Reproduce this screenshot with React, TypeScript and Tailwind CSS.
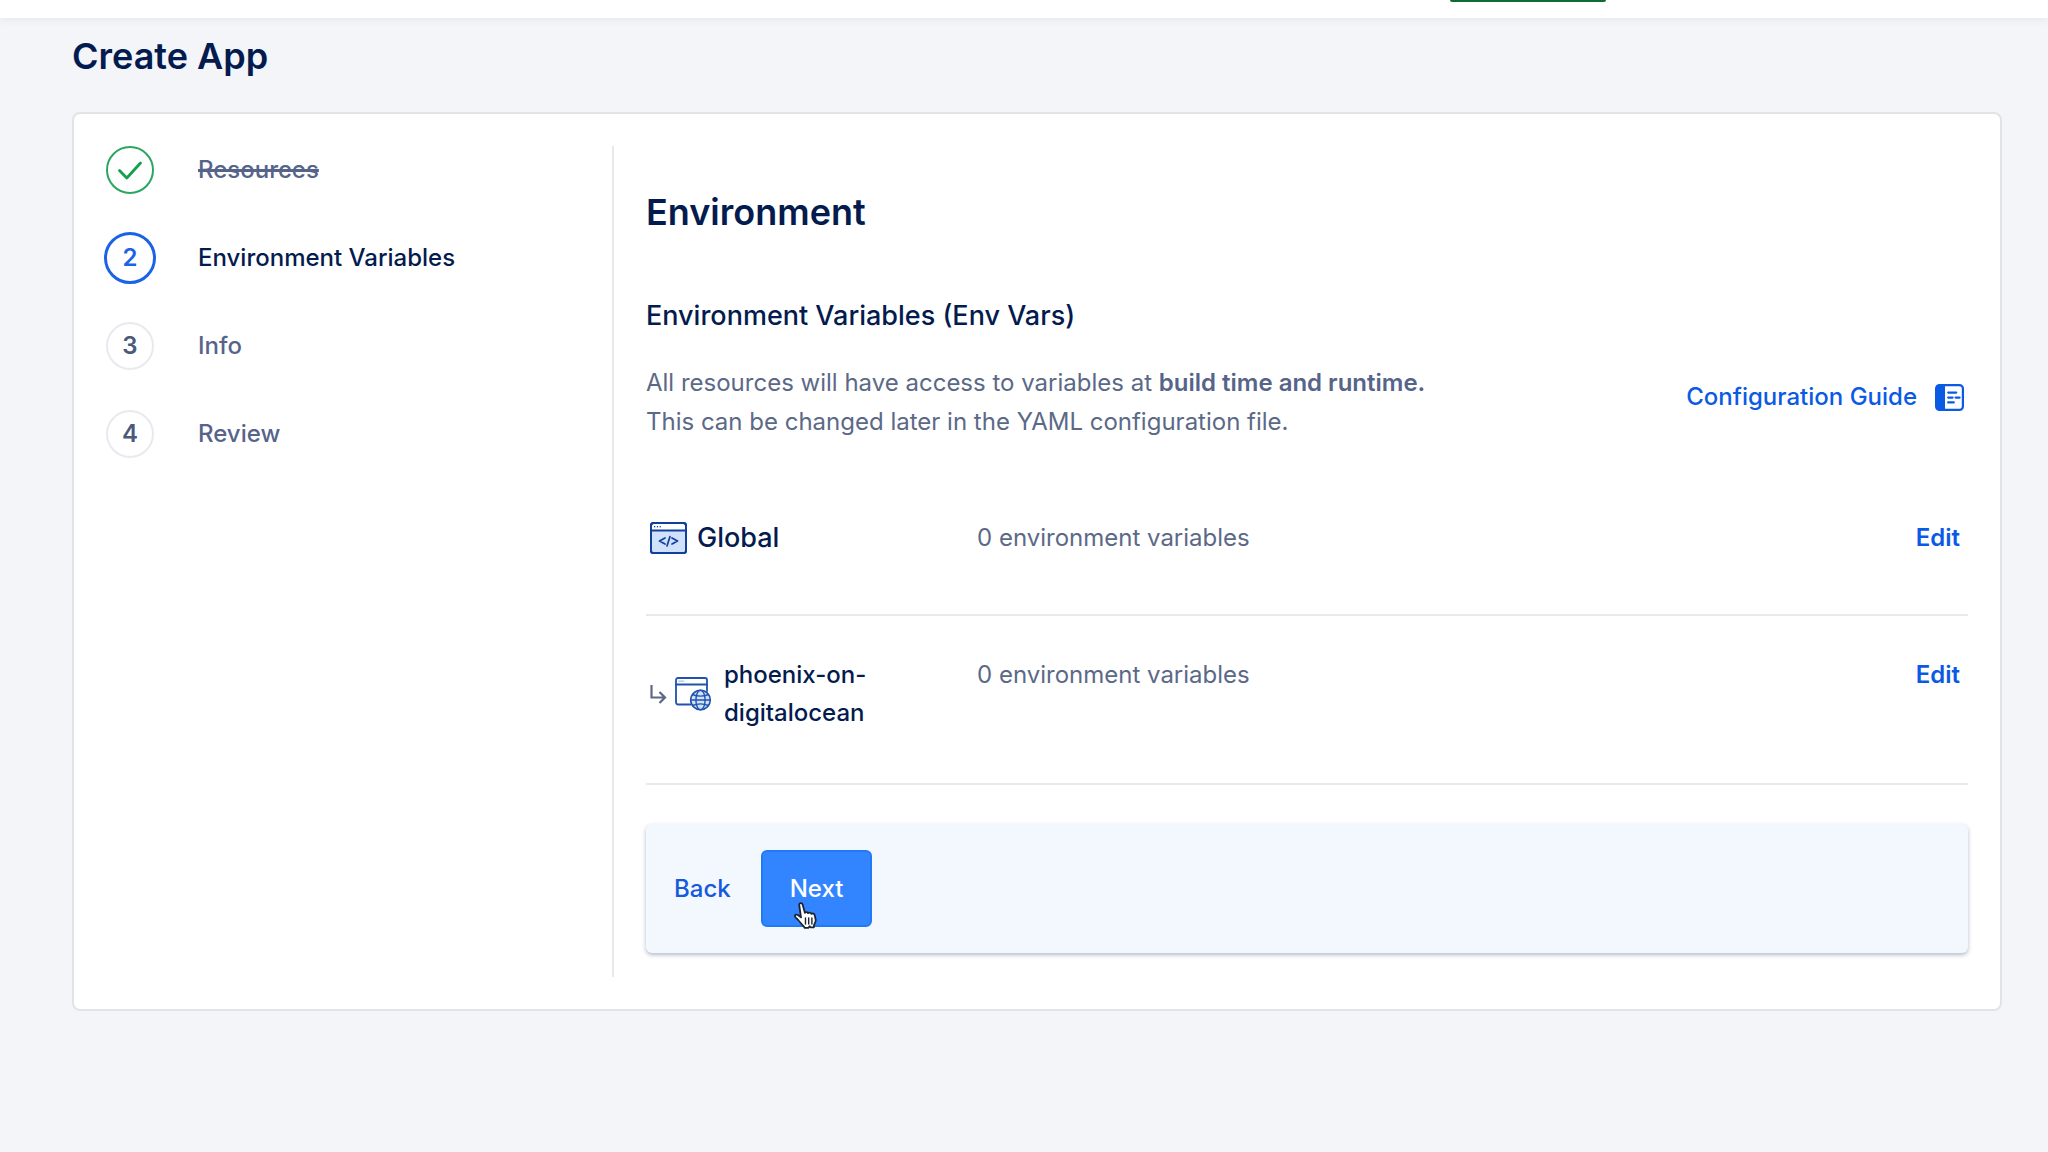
import { type ReactNode } from "react";

function CheckIcon() {
  return (
    <svg width="26" height="20" viewBox="0 0 26 20" fill="none" stroke="#15a04a" strokeWidth="2.8" strokeLinecap="round" strokeLinejoin="round" aria-hidden="true">
      <path d="M2.500 10.500 9.800 18 23.500 3" />
    </svg>
  );
}

function GuideIcon() {
  return (
    <svg width="29" height="27" viewBox="0 0 29 27" fill="none" aria-hidden="true">
      <rect x="1.1" y="1.1" width="26.8" height="24.8" rx="3.4" stroke="#0b5ae4" strokeWidth="2.2" />
      <path d="M4 1h6v25H4a3 3 0 0 1-3-3V4a3 3 0 0 1 3-3Z" fill="#0b5ae4" />
      <path d="M13.2 8.6h8M13.2 13.6h4.4M20.6 13.6h4M13.2 18.4h5.6" stroke="#0b5ae4" strokeWidth="2.2" strokeLinecap="round" />
    </svg>
  );
}

function CodeWindowIcon() {
  return (
    <svg width="37" height="32" viewBox="0 0 37 32" fill="none" stroke="#123f9c" strokeLinecap="round" strokeLinejoin="round" aria-hidden="true">
      <rect x="1" y="1" width="35" height="30" rx="2.5" fill="#fff" strokeWidth="2" />
      <path d="M2 9h33v20a1 1 0 0 1-1 1H3a1 1 0 0 1-1-1Z" fill="#cfe1fb" stroke="none" />
      <rect x="1" y="1" width="35" height="30" rx="2.5" strokeWidth="2" />
      <path d="M1 8.5h35" strokeWidth="1.8" />
      <path d="M4.6 4.8h.1M7.4 4.8h.1M10.2 4.8h.1" strokeWidth="1.4" />
      <path d="m15 16-5.5 3 5.5 3M22 16l5.5 3-5.5 3M20 14.500l-3 9.500" strokeWidth="1.7" />
    </svg>
  );
}

function GlobeWindowIcon() {
  return (
    <svg width="37" height="34" viewBox="0 0 37 34" fill="none" stroke="#2052ae" strokeLinecap="round" strokeLinejoin="round" aria-hidden="true">
      <path d="M15.500 27.500H3A2 2 0 0 1 1 25.500V3a2 2 0 0 1 2-2h27a2 2 0 0 1 2 2v11" strokeWidth="1.8" />
      <path d="M1 7.500h31" strokeWidth="2.2" />
      <path d="M3.800 4.200h5" stroke="#a9c2ec" strokeWidth="1.2" />
      <circle cx="25.500" cy="23" r="9.800" fill="#cfe1fb" strokeWidth="1.6" />
      <ellipse cx="25.500" cy="23" rx="4.600" ry="9.800" strokeWidth="1.4" />
      <path d="M15.700 23h19.600M17.500 17.500c5 2 11 2 16 0M17.500 28.500c5-2 11-2 16 0" strokeWidth="1.4" />
    </svg>
  );
}

function NestedArrow() {
  return (
    <svg width="17" height="19" viewBox="0 0 17 19" fill="none" stroke="#5b6987" strokeWidth="2.200" aria-hidden="true">
      <path d="M1.500 0v12.500H15M9.500 7l5.500 5.500L9.500 18" />
    </svg>
  );
}

function HandCursor() {
  return (
    <svg className="absolute left-[30px] top-[50px]" width="26" height="28" viewBox="0 0 26 28" aria-hidden="true">
      <path
        d="M6.200 3C6 .8 9 .4 9.600 2.500l2.300 8.300c.5-1 2.800-1 3.200.4.700-1 2.900-.8 3.300.7 1-.8 2.900-.3 3.300 1.300l1 4.600c.2 2-1 3.600-1.700 5.200l-.2 2.300h-3.300l-.8-1-1.400 1.600H11.700l-1-1.600c-2-1.800-3.600-4.300-5.500-6.300-1-1.100-3.100-2.700-3.300-3.900-.2-1.500 1.800-1.900 3-1.100l3.100 2.400Z"
        fill="#fff"
        stroke="#1c2430"
        strokeWidth="1.8"
        strokeLinejoin="round"
      />
      <path d="M12.500 16v6M15.700 16v6M18.900 16v6" stroke="#1c2430" strokeWidth="1.400" strokeLinecap="round" />
    </svg>
  );
}

function Badge({ state, children }: { state: "done" | "current" | "todo"; children: ReactNode }) {
  const look = {
    done: "size-12 border-2 border-[#2ba660]",
    current: "size-[52px] border-[3px] border-[#1b62e6] text-[#1b62e6]",
    todo: "size-12 border-2 border-[#e9eaef] text-[#4b5a7b]",
  }[state];
  return (
    <span className="flex w-[52px] justify-center">
      <span className={`flex items-center justify-center rounded-full font-semibold ${look}`}>{children}</span>
    </span>
  );
}

const steps = [
  { label: "Resources", state: "done", tone: "text-[#56648a] line-through decoration-3" },
  { label: "Environment Variables", state: "current", tone: "text-[#031b4e]" },
  { label: "Info", state: "todo", tone: "text-[#56648a]" },
  { label: "Review", state: "todo", tone: "text-[#56648a]" },
] as const;

function Row({ name, count, height }: { name: ReactNode; count: string; height: string }) {
  return (
    <li className={`grid grid-cols-[331px_1fr_auto] items-start border-b-2 border-[#e8e9ec] pr-2 ${height}`}>
      <div>{name}</div>
      <span className="text-[#5b6987]">{count}</span>
      <button type="button" className="font-semibold text-[#0b5ae4]">Edit</button>
    </li>
  );
}

export default function App() {
  return (
    <div className="min-h-screen bg-[#f3f5f9] font-['Inter',sans-serif] text-[24px] leading-[38px] text-[#031b4e]">
      <header className="flex h-[18px] bg-white pr-[442px] shadow-[0_2px_8px_rgba(0,0,0,0.06)]">
        <div className="ml-auto h-[2px] w-[156px] rounded-b-sm bg-[#0f6b35]" />
      </header>
      <main className="pt-4 pr-[46px] pl-[72px]">
        <h1 className="text-[36px] leading-[44px] font-semibold">Create App</h1>
        <section className="mt-[34px] flex rounded-lg border-2 border-[#e1e3e7] bg-white py-8 pr-8 pl-[30px]">
          <nav aria-label="Steps" className="w-[510px] shrink-0 border-r-2 border-[#e8e9ec]">
            <ol className="-mt-0.5 flex flex-col gap-9">
              {steps.map((step) => (
                <li key={step.label} className="flex h-[52px] items-center gap-[42px]" aria-current={step.state === "current" ? "step" : undefined}>
                  <Badge state={step.state}>{step.state === "done" ? <CheckIcon /> : steps.indexOf(step) + 1}</Badge>
                  <span className={`font-medium ${step.tone}`}>{step.label}</span>
                </li>
              ))}
            </ol>
          </nav>
          <div className="flex-1 pt-11 pb-6 pl-8">
            <h2 className="text-[36px] leading-[44px] font-semibold">Environment</h2>
            <h3 className="mt-[62px] text-[27px] leading-[40px] font-medium">Environment Variables (Env Vars)</h3>
            <div className="mt-[27px] flex items-center justify-between">
              <p className="leading-[39px] text-[#5b6987]">
                All resources will have access to variables at <strong className="font-semibold text-[#56648a]">build time and runtime.</strong>
                <br />
                This can be changed later in the YAML configuration file.
              </p>
              <a href="#guide" className="mb-2.5 flex items-center gap-[18px] pr-1 font-medium text-[#0b5ae4]">
                Configuration Guide
                <GuideIcon />
              </a>
            </div>
            <ul>
              <Row
                height="h-[175px] pt-[78px]"
                count="0 environment variables"
                name={
                  <span className="flex items-center gap-2.5 pl-1 text-[27px] font-medium">
                    <CodeWindowIcon />
                    Global
                  </span>
                }
              />
              <Row
                height="h-[169px] pt-[40px]"
                count="0 environment variables"
                name={
                  <span className="flex items-center gap-2 pl-1 font-medium">
                    <NestedArrow />
                    <GlobeWindowIcon />
                    <span className="ml-1">
                      phoenix-on-
                      <br />
                      digitalocean
                    </span>
                  </span>
                }
              />
            </ul>
            <div className="mt-[39px] flex items-center gap-[30px] rounded-md bg-[#f3f7fe] px-7 py-[26px] shadow-[0_2px_4px_rgba(3,27,78,0.3)]">
              <button type="button" className="font-medium text-[#1559dc]">Back</button>
              <button type="button" className="relative h-[77px] rounded-md border-2 border-[#2279f5] bg-[#3385ff] px-[27px] font-medium text-white">
                Next
                <HandCursor />
              </button>
            </div>
          </div>
        </section>
      </main>
    </div>
  );
}
